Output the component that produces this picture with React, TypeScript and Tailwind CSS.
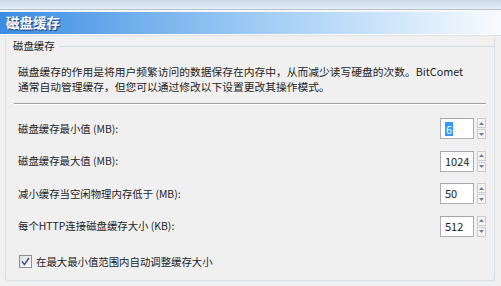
import React, { useState } from 'react';

const font = { fontFamily: '"Noto Sans CJK SC", "Liberation Sans", sans-serif' };

interface SpinProps {
  value: string;
  selected?: boolean;
}

const Spin: React.FC<SpinProps> = ({ value, selected }) => (
  <div className="flex items-center gap-[3px]">
    <div className="w-[34px] h-[21px] bg-white border border-[#abadb3] border-t-[#a3a6ad] flex items-center pl-[4px] text-[11px] text-[#1a1a1a]">
      {selected ? <span className="bg-[#3399ff] text-white px-[1px] leading-[14px]">{value}</span> : value}
    </div>
    <div className="flex flex-col w-[9px] h-[21px] gap-[1px]">
      <div className="flex-1 bg-[#f4f4f4] border border-[#c8ccd4] flex items-center justify-center">
        <svg width="5" height="3" viewBox="0 0 5 3"><path d="M0 3 L2.5 0 L5 3 Z" fill="#6d7d95" /></svg>
      </div>
      <div className="flex-1 bg-[#f4f4f4] border border-[#c8ccd4] flex items-center justify-center">
        <svg width="5" height="3" viewBox="0 0 5 3"><path d="M0 0 L2.5 3 L5 0 Z" fill="#6d7d95" /></svg>
      </div>
    </div>
  </div>
);

const rows = [
  { label: '磁盘缓存最小值 (MB):', value: '6', selected: true },
  { label: '磁盘缓存最大值 (MB):', value: '1024' },
  { label: '减小缓存当空闲物理内存低于 (MB):', value: '50' },
  { label: '每个HTTP连接磁盘缓存大小 (KB):', value: '512' },
];

export default function App() {
  const [auto, setAuto] = useState(true);

  return (
    <div className="w-[501px] h-[286px] bg-[#f0f0f0] overflow-hidden text-[#1e1e1e]" style={font}>
      {/* window top strip */}
      <div className="h-[10px] bg-gradient-to-b from-[#c9d8e8] to-[#e4edf5] border-b border-[#b9c3cd]" />
      <div className="h-[2px] bg-[#f7f7f7]" />

      {/* blue header */}
      <div className="h-[22px] bg-gradient-to-r from-[#3b8de3] via-[#9ccaf4] to-[#f8fbff] flex items-center pl-[6px]">
        <span className="text-[13.5px] font-bold text-white leading-none [text-shadow:1px_1px_1px_#0b3a7a]">磁盘缓存</span>
      </div>
      <div className="h-[2px] bg-[#fafafa] border-b border-[#e3e3e3]" />

      {/* group box */}
      <div className="px-[5px] pt-[2px]">
        <div className="border-l border-r border-b border-[#d5dfe5] rounded-b-[3px] h-[243px] mr-[1px] text-[10.4px]">
          <div className="flex items-center h-[16px]">
            <span className="pl-[7px] pr-[4px] leading-none text-[#1e1e1e]">磁盘缓存</span>
            <div className="flex-1 border-t border-[#d5dfe5]" />
          </div>

          <div className="pl-[12px] pr-[8px] pt-[10px] leading-[15px] whitespace-nowrap text-[10.75px]">
            <p>磁盘缓存的作用是将用户频繁访问的数据保存在内存中，从而减少读写硬盘的次数。BitComet</p>
            <p>通常自动管理缓存，但您可以通过修改以下设置更改其操作模式。</p>
          </div>

          <div className="mx-[8px] mt-[9px] border-t border-[#a0a0a0] border-b-white border-b" />

          <div className="flex flex-col pl-[12px] pr-[8px] pt-[13px] gap-[11.5px]">
            {rows.map((r) => (
              <div key={r.label} className="flex items-center justify-between">
                <span>{r.label}</span>
                <Spin value={r.value} selected={r.selected} />
              </div>
            ))}
          </div>

          <label className="flex items-center gap-[4px] pl-[13px] mt-[17px] cursor-pointer leading-[15px]">
            <span
              className="w-[13px] h-[13px] border border-[#8e8f8f] bg-gradient-to-br from-[#dcdcdc] to-white flex items-center justify-center"
              onClick={() => setAuto(!auto)}
            >
              {auto && (
                <svg width="9" height="9" viewBox="0 0 9 9">
                  <path d="M1 4.5 L3.5 7.5 L8 1" stroke="#3c5a9a" strokeWidth="1.6" fill="none" />
                </svg>
              )}
            </span>
            <span>在最大最小值范围内自动调整缓存大小</span>
          </label>
        </div>
      </div>
    </div>
  );
}
